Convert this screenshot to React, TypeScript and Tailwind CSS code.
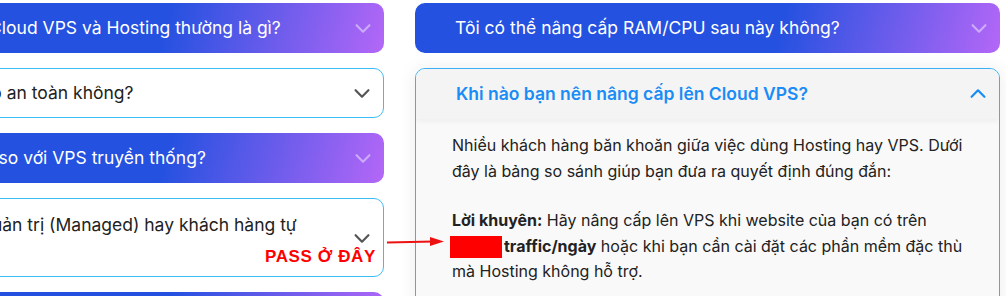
import React from 'react';

interface FaqItem {
  q: string;
  open?: boolean;
}

const leftItems: FaqItem[] = [
  { q: 'Sự khác biệt giữa Cloud VPS và Hosting thường là gì?' },
  { q: 'Dữ liệu trên VPS có an toàn không?' },
  { q: 'Cloud VPS khác gì so với VPS truyền thống?' },
  { q: 'Cloud VPS được quản trị (Managed) hay khách hàng tự quản trị?' },
  { q: 'Tôi có thể dùng thử Cloud VPS trước khi mua không?' },
];

function Chevron({ up = false, className = '' }: { up?: boolean; className?: string }) {
  return (
    <svg viewBox="0 0 24 24" className={`h-[22px] w-[22px] shrink-0 ${className}`} fill="none" stroke="currentColor" strokeWidth="2.4" strokeLinecap="round" strokeLinejoin="round">
      {up ? <path d="M5 15l7-7 7 7" /> : <path d="M5 9l7 7 7-7" />}
    </svg>
  );
}

function ClosedCard({ q, variant, tall = false }: { q: string; variant: 'blue' | 'white'; tall?: boolean }) {
  const blue = variant === 'blue';
  return (
    <div
      className={`flex items-center justify-between rounded-[10px] pl-[40px] pr-[10px] ${
        tall ? 'min-h-[79px] py-[12px]' : 'h-[50px]'
      } ${
        blue
          ? 'bg-[linear-gradient(105deg,#2451e0_62%,#b467f7_100%)] text-white'
          : 'border border-[#3bbdf6] bg-white text-[#222]'
      }`}
    >
      <span className="pr-6 text-[17.5px] leading-[26px]">{q}</span>
      <Chevron className={blue ? 'text-white/45' : 'text-[#555]'} />
    </div>
  );
}

export default function App() {
  return (
    <div className="relative h-[296px] w-[1006px] overflow-hidden bg-white font-['Inter',sans-serif]">
      <div className="flex gap-[31px] pt-[3px]">
        {/* left column, cut off by the screenshot */}
        <div className="-ml-[199px] flex w-[583px] shrink-0 flex-col gap-[15px]">
          <ClosedCard q={leftItems[0].q} variant="blue" />
          <ClosedCard q={leftItems[1].q} variant="white" />
          <ClosedCard q={leftItems[2].q} variant="blue" />
          <ClosedCard q={leftItems[3].q} variant="white" tall />
          <ClosedCard q={leftItems[4].q} variant="blue" />
        </div>

        {/* right column */}
        <div className="flex w-[585px] shrink-0 flex-col gap-[15px]">
          <ClosedCard q="Tôi có thể nâng cấp RAM/CPU sau này không?" variant="blue" />

          <div className="overflow-hidden rounded-[10px] border border-[#3bb0f6] bg-[#f9f9f9] shadow-[0_0_18px_rgba(0,0,0,0.08)]">
            <div className="flex h-[50px] items-center justify-between bg-[#f4f4f4] pl-[40px] pr-[10px] shadow-[0_2px_6px_rgba(0,0,0,0.05)]">
              <span className="text-[17.5px] font-semibold text-[#1a8cf5]">Khi nào bạn nên nâng cấp lên Cloud VPS?</span>
              <Chevron up className="text-[#1a8cf5]" />
            </div>
            <div className="pl-[36px] pr-[12px] pt-[14px] pb-6 text-[16px] leading-[25.5px] text-[#222]">
              <p>
                Nhiều khách hàng băn khoăn giữa việc dùng Hosting hay VPS. Dưới đây là bảng so sánh giúp bạn đưa ra quyết định đúng đắn:
              </p>
              <p className="mt-[24px]">
                <strong>Lời khuyên:</strong> Hãy nâng cấp lên VPS khi website của bạn có trên{' '}
                <span className="whitespace-nowrap">
                  <span className="-ml-[2px] inline-block h-[22px] w-[52px] bg-[#ff0000] align-middle" />
                  <strong className="ml-[2px]">traffic/ngày</strong>
                </span>{' '}
                hoặc khi bạn cần cài đặt các phần mềm đặc thù mà Hosting không hỗ trợ.
              </p>
            </div>
          </div>
        </div>
      </div>

      {/* annotation */}
      <span className="absolute left-[265px] top-[248px] font-['Liberation_Sans',sans-serif] text-[17px] font-bold leading-none tracking-[0.6px] text-[#ff0000]">
        PASS Ở ĐÂY
      </span>
      <svg className="absolute left-[386px] top-[235px]" width="60" height="14" viewBox="0 0 60 14">
        <line x1="1" y1="7.5" x2="48" y2="6.5" stroke="#ee1111" strokeWidth="2" />
        <path d="M44 2 L58 6.5 L44 11 Z" fill="#ee1111" />
      </svg>
    </div>
  );
}
